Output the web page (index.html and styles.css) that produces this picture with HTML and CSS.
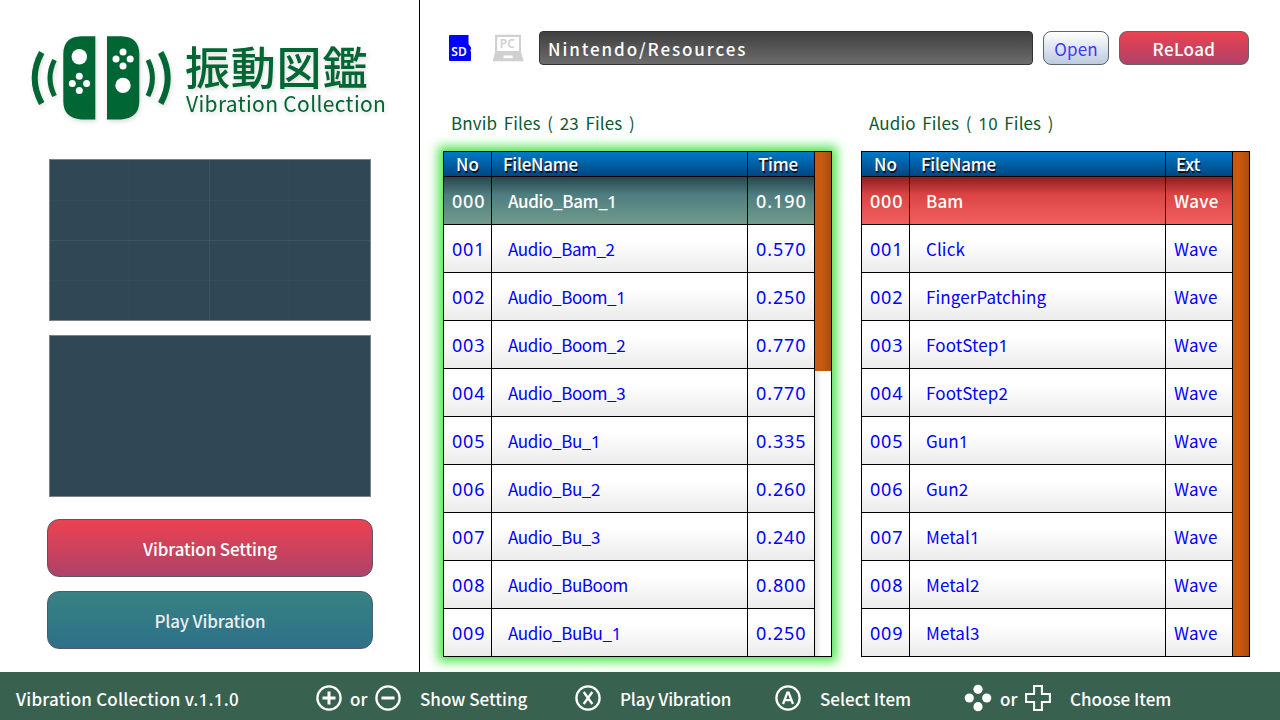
FILE: index.html
```html
<!DOCTYPE html>
<html lang="en">
<head>
<meta charset="utf-8">
<title>Vibration Collection</title>
<link rel="stylesheet" href="styles.css">
</head>
<body>
<div class="app">
  <aside class="side">
    <div class="logo">
      <svg class="logo-mark" width="146" height="90" viewBox="28 33 146 90">
        <g fill="#006633">
          <path d="M95.3 36.3V119.4H81Q63.3 118 63.3 101V54Q63.3 37 81 36.3Z"/>
          <path d="M107 36.3V119.4H121.300Q139.300 118 139.300 101V54Q139.300 37 121.300 36.300Z"/>
        </g>
        <g fill="none" stroke="#006633">
          <path stroke-width="6" d="M41.700 52.500Q27.700 78 41.700 103.500M160.700 52.500Q174.700 78 160.700 103.500"/>
          <path stroke-width="5" d="M54.500 60Q45.500 78 54.500 96M147.900 60Q156.900 78 147.900 96"/>
        </g>
        <g fill="#fff">
          <circle cx="79.300" cy="56.800" r="7.700"/><circle cx="79.300" cy="76.300" r="3.500"/><circle cx="72.300" cy="83.400" r="3.500"/><circle cx="86.600" cy="83.400" r="3.500"/><circle cx="79.300" cy="90.600" r="3.500"/>
          <circle cx="123" cy="85.400" r="7.700"/><circle cx="123" cy="52" r="3.500"/><circle cx="116" cy="59" r="3.500"/><circle cx="130.200" cy="59" r="3.500"/><circle cx="123" cy="66.100" r="3.500"/>
        </g>
      </svg>
      <div class="logo-words"><div class="logo-ja">振動図鑑</div><div class="logo-en">Vibration Collection</div></div>
    </div>
    <div class="graph graph-grid"></div>
    <div class="graph graph-plain"></div>
    <div class="big-btn red">Vibration Setting</div>
    <div class="big-btn teal">Play Vibration</div>
  </aside>
  <main class="main">
    <div class="toolbar">
      <svg class="sd" width="24" height="28" viewBox="448 34 24 28">
        <path fill="#00f" d="M450 35H468.500V44L471 47.500V49Q469.500 50 471 52V60Q471 61 470 61H450Q449 61 449 60V36Q449 35 450 35Z"/>
        <text class="sd-text" x="451.300" y="56.300">SD</text>
      </svg>
      <svg class="pc" width="32" height="28" viewBox="492 34 32 28">
        <path fill="#d0d0d0" fill-rule="evenodd" d="M495 34.700H521V52L523.700 61.200H492.700L495 52ZM497.200 37V51H519V37ZM504 55.500L503.300 58.300H513L512.300 55.500Z"/>
        <text class="pc-text" x="499.800" y="48.300">PC</text>
      </svg>
      <div class="path">Nintendo/Resources</div>
      <div class="btn open">Open</div>
      <div class="btn red reload">ReLoad</div>
    </div>
    <div class="lists">
      <section class="panel">
        <h2 class="title">Bnvib Files ( 23 Files )</h2>
        <div class="frame active">
          <div class="table bnvib">
            <div class="row head"><span class="no">No</span><span class="name">FileName</span><span class="ext">Time</span></div>
            <div class="row selected green"><span class="no">000</span><span class="name">Audio_Bam_<b>1</b></span><span class="ext num">0.190</span></div>
            <div class="row"><span class="no">001</span><span class="name">Audio_Bam_2</span><span class="ext num">0.570</span></div>
            <div class="row"><span class="no">002</span><span class="name">Audio_Boom_<b>1</b></span><span class="ext num">0.250</span></div>
            <div class="row"><span class="no">003</span><span class="name">Audio_Boom_2</span><span class="ext num">0.770</span></div>
            <div class="row"><span class="no">004</span><span class="name">Audio_Boom_3</span><span class="ext num">0.770</span></div>
            <div class="row"><span class="no">005</span><span class="name">Audio_Bu_<b>1</b></span><span class="ext num">0.335</span></div>
            <div class="row"><span class="no">006</span><span class="name">Audio_Bu_2</span><span class="ext num">0.260</span></div>
            <div class="row"><span class="no">007</span><span class="name">Audio_Bu_3</span><span class="ext num">0.240</span></div>
            <div class="row"><span class="no">008</span><span class="name">Audio_BuBoom</span><span class="ext num">0.800</span></div>
            <div class="row"><span class="no">009</span><span class="name">Audio_BuBu_<b>1</b></span><span class="ext num">0.250</span></div>
          </div>
          <div class="scroll"><div class="thumb partial"></div></div>
        </div>
      </section>
      <section class="panel">
        <h2 class="title">Audio Files ( <b>1</b>0 Files )</h2>
        <div class="frame">
          <div class="table">
            <div class="row head"><span class="no">No</span><span class="name">FileName</span><span class="ext">Ext</span></div>
            <div class="row selected crimson"><span class="no">000</span><span class="name">Bam</span><span class="ext">Wave</span></div>
            <div class="row"><span class="no">001</span><span class="name">Click</span><span class="ext">Wave</span></div>
            <div class="row"><span class="no">002</span><span class="name">FingerPatching</span><span class="ext">Wave</span></div>
            <div class="row"><span class="no">003</span><span class="name">FootStep<b>1</b></span><span class="ext">Wave</span></div>
            <div class="row"><span class="no">004</span><span class="name">FootStep2</span><span class="ext">Wave</span></div>
            <div class="row"><span class="no">005</span><span class="name">Gun<b>1</b></span><span class="ext">Wave</span></div>
            <div class="row"><span class="no">006</span><span class="name">Gun2</span><span class="ext">Wave</span></div>
            <div class="row"><span class="no">007</span><span class="name">Metal<b>1</b></span><span class="ext">Wave</span></div>
            <div class="row"><span class="no">008</span><span class="name">Metal2</span><span class="ext">Wave</span></div>
            <div class="row"><span class="no">009</span><span class="name">Metal3</span><span class="ext">Wave</span></div>
          </div>
          <div class="scroll"><div class="thumb"></div></div>
        </div>
      </section>
    </div>
  </main>
  <footer class="footer">
    <span class="version">Vibration Collection v.<b>1</b>.<b>1</b>.0</span>
    <div class="hint hint-show">
      <svg class="key" width="26" height="26" viewBox="0 0 26 26"><circle cx="13" cy="13" r="11.600"/><path class="thick" d="M13 6.500V19.500M6.500 13H19.500"/></svg>
      <span class="or">or</span>
      <svg class="key" width="26" height="26" viewBox="0 0 26 26"><circle cx="13" cy="13" r="11.600"/><path class="thick" d="M6.500 13H19.500"/></svg>
      <span class="label">Show Setting</span>
    </div>
    <div class="hint hint-play">
      <svg class="key" width="26" height="26" viewBox="0 0 26 26"><circle cx="13" cy="13" r="11.600"/><path d="M8.700 7L17.300 19M17.300 7L8.700 19"/></svg>
      <span class="label">Play Vibration</span>
    </div>
    <div class="hint hint-select">
      <svg class="key" width="26" height="26" viewBox="0 0 26 26"><circle cx="13" cy="13" r="11.600"/><path d="M8 19L12.400 7.700H13.600L18 19M9.800 15.200H16.200"/></svg>
      <span class="label">Select Item</span>
    </div>
    <div class="hint hint-choose">
      <svg width="28" height="28" viewBox="0 0 28 28" fill="#fff"><circle cx="14" cy="5.300" r="4.600"/><circle cx="5.300" cy="14" r="4.600"/><circle cx="22.700" cy="14" r="4.600"/><circle cx="14" cy="22.700" r="4.600"/></svg>
      <span class="or">or</span>
      <svg class="key pad" width="26" height="26" viewBox="0 0 26 26"><path d="M9.100 1.100H16.900V9.100H24.900V16.900H16.900V24.900H9.100V16.900H1.100V9.100H9.100Z"/></svg>
      <span class="label">Choose Item</span>
    </div>
  </footer>
</div>
</body>
</html>
```
FILE: styles.css
```css
* { box-sizing: border-box; }
body { margin: 0; font-family: "Noto Sans CJK JP", sans-serif; font-size: 17px; }
b { font-family: "Noto Sans", sans-serif; font-weight: inherit; line-height: 1; }
svg { display: block; flex: none; }
.app { width: 1280px; height: 720px; overflow: hidden; background: #fff; display: grid; grid-template-columns: 420px 860px; grid-template-rows: 672px 48px; white-space: nowrap; }

.side { border-right: 1px solid #000; padding: 33px 0 0 47px; }
.logo { display: flex; height: 126px; margin-left: -19px; filter: drop-shadow(1px 2px 2px rgba(0,0,0,.15)); }
.logo-words { margin-left: 11px; color: #063; }
.logo-ja { font-weight: 500; font-size: 45px; line-height: 46px; margin-top: 10px; letter-spacing: .8px; }
.logo-en { font-size: 21px; line-height: 26px; letter-spacing: .35px; margin: 1px 0 0 1px; }
.graph { width: 322px; height: 162px; margin: 0 0 14px 2px; border: 1px solid #808080; background-color: #304755; }
.graph-grid { background-image:
  linear-gradient(90deg, transparent 159px, #3b545d 159px, #3b545d 160px, transparent 160px),
  linear-gradient(transparent 80px, #3b545d 80px, #3b545d 81px, transparent 81px),
  linear-gradient(90deg, transparent 79px, #334c57 79px, #334c57 80px, transparent 80px, transparent 239px, #334c57 239px, #334c57 240px, transparent 240px),
  linear-gradient(transparent 40px, #334c57 40px, #334c57 41px, transparent 41px, transparent 120px, #334c57 120px, #334c57 121px, transparent 121px); }
.big-btn { width: 326px; height: 58px; margin-bottom: 14px; border: 1.5px solid #505a6a; border-radius: 12px; color: #fff; font-weight: 500; text-align: center; line-height: 58px; letter-spacing: -.15px; }
.graph-plain { margin-bottom: 22px; }
.red { background: linear-gradient(#ec4250, #ae4268); }
.teal { background: linear-gradient(#378283, #2e7089); color: #eee; }

.main { padding: 31px 0 0 23px; }
.toolbar { display: flex; height: 34px; }
.sd { margin: 3px 0 0 5px; }
.pc { margin: 3px 0 0 20px; }
.sd-text { font: 600 12px "Noto Sans", sans-serif; fill: #fff; }
.pc-text { font: 600 12px "Noto Sans", sans-serif; fill: #d0d0d0; }
.path { width: 494px; height: 34px; margin-left: 15px; padding-left: 8px; border: 1px solid #333; border-radius: 4px; background: linear-gradient(#3f3f3f, #6c6c6c); color: #fff; font-weight: 500; line-height: 34px; letter-spacing: 1.9px; }
.btn { height: 34px; border: 1.5px solid #5c6470; border-radius: 8px; text-align: center; line-height: 34px; }
.open { width: 66px; margin-left: 10px; color: #3a3af5; background: linear-gradient(#fff, #bdcade); letter-spacing: .1px; }
.reload { width: 130px; margin-left: 10px; color: #fff; font-weight: 500; letter-spacing: .4px; }

.lists { display: flex; gap: 29px; margin-top: 46px; }
.panel { width: 389px; }
.title { margin: 0; height: 40px; padding-left: 8px; color: #0d5830; font-size: 17px; font-weight: 400; line-height: 24px; letter-spacing: .1px; word-spacing: 2.8px; }
.frame { display: flex; width: 389px; height: 506px; border: 1px solid #000; background: #fff; }
.active { box-shadow: 0 0 10px 5px #52e652; }
.table { width: 371px; border-right: 1px solid #000; }
.row { display: grid; grid-template-columns: 48px 256px 66px; grid-template-rows: 100%; height: 48px; line-height: 48px; color: #00f; border-bottom: 1px solid #000; background: linear-gradient(#fff 35%, #ebebeb); }
.row:last-child { height: 47px; border-bottom: 0; }
.row span { border-right: 1px solid #000; }
.row .ext { border-right: 0; padding-left: 8px; letter-spacing: .3px; }
.row .no { padding-left: 8px; }
.row .name { padding-left: 16px; letter-spacing: .1px; }
.bnvib .row .name { letter-spacing: -.4px; }
.row:not(.head) .no, .row .num { font-family: "Noto Sans", sans-serif; font-size: 18px; line-height: 49px; letter-spacing: .8px; }
.row .num { letter-spacing: .9px; }
.row.head { height: 25px; line-height: 24px; color: #fff; font-weight: 500; background: linear-gradient(#0079c8, #004680); text-shadow: 1px 2px 0 #111; }
.row.head .no { padding-left: 12px; }
.row.head .name { padding-left: 11px; letter-spacing: -.3px; }
.row.head .ext { padding-left: 10px; letter-spacing: -.3px; }
.row.selected { color: #fff; font-weight: 500; }
.row.green { background: linear-gradient(#25464d, #4e7d80 38%, #719b8c); }
.row.crimson { background: linear-gradient(#8a2020, #dc4444 38%, #f06060); }
.scroll { width: 16px; background: linear-gradient(90deg, #e5e5e5, #fff 45%); }
.thumb { height: 504px; background: linear-gradient(90deg, #c8590e 45%, #a94c10); }
.thumb.partial { height: 219px; }

.footer { grid-column: 1 / -1; display: flex; padding-left: 16px; background: #396150; color: #fff; font-weight: 500; line-height: 54px; }
.version { width: 300px; letter-spacing: .2px; }
.hint { display: flex; height: 48px; }
.hint svg { margin-top: 13px; }
.hint-show { width: 259px; }
.hint-play { width: 200px; }
.hint-play .label { letter-spacing: -.15px; }
.hint-select { width: 189px; }
.hint .or { width: 33px; padding-left: 8px; }
.hint .label { margin-left: 19px; }
.hint-choose svg:first-child { margin-top: 12px; }
.key { fill: none; stroke: #fff; stroke-width: 2.300; }
.key .thick { stroke-width: 3; }
.pad { stroke-width: 2; }
```
